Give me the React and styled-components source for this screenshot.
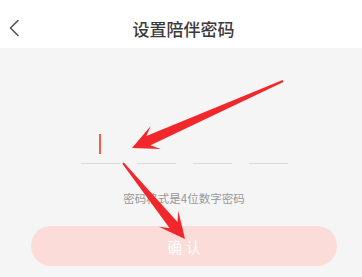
import styled, { createGlobalStyle } from "styled-components";

const GlobalStyle = createGlobalStyle`
  html, body {
    margin: 0;
    padding: 0;
    background: #f5f5f5;
    font-family: "Noto Sans CJK SC", "Noto Sans", sans-serif;
  }
`;

// polygon for a tapered annotation arrow, tail -> tip
const arrowPoints = (tail, tip, headLen = 26, headHalf = 12.5, neck = 18, shaftHalf = 5, tailHalf = 1) => {
  const dx = tip[0] - tail[0];
  const dy = tip[1] - tail[1];
  const len = Math.hypot(dx, dy);
  const ux = dx / len;
  const uy = dy / len;
  const nx = -uy;
  const ny = ux;
  const at = (back, side) => [tip[0] - ux * back + nx * side, tip[1] - uy * back + ny * side];
  const pts = [
    at(len, -tailHalf),
    at(len, tailHalf),
    at(neck, shaftHalf),
    at(headLen, headHalf),
    tip,
    at(headLen, -headHalf),
    at(neck, -shaftHalf),
  ];
  return pts.map((p) => p.map((v) => v.toFixed(1)).join(",")).join(" ");
};

const App = () => {
  return (
    <Page>
      <GlobalStyle />
      <Header>
        <BackButton>
          <svg width="12" height="18" viewBox="0 0 12 18">
            <path d="M10 1.5 L2.5 9 L10 16.5" fill="none" stroke="#555" strokeWidth="1.6" strokeLinecap="round" strokeLinejoin="round" />
          </svg>
        </BackButton>
        <Title>设置陪伴密码</Title>
      </Header>

      <Body>
        <CodeRow>
          <CodeBox><Cursor /></CodeBox>
          <CodeBox />
          <CodeBox />
          <CodeBox />
        </CodeRow>
        <Hint>密码格式是4位数字密码</Hint>
        <ConfirmButton>确 认</ConfirmButton>
      </Body>

      <Annotations width="362" height="277" viewBox="0 0 362 277">
        <polygon points={arrowPoints([283, 81], [132, 148])} fill="#f2272c" />
        <polygon points={arrowPoints([123, 163], [185, 239])} fill="#f2272c" />
      </Annotations>
    </Page>
  );
};

export default App;

const Page = styled.div`
  position: relative;
  width: 362px;
  height: 277px;
  overflow: hidden;
  background: #f5f5f5;
`;

const Header = styled.div`
  position: relative;
  height: 48px;
  background: #ffffff;
  display: flex;
  align-items: center;
  justify-content: center;
`;

const BackButton = styled.div`
  position: absolute;
  left: 8px;
  top: 19px;
  display: flex;
`;

const Title = styled.div`
  font-size: 17px;
  color: #3a3a3a;
  font-weight: 500;
  padding-left: 5px;
  margin-top: 8px;
`;

const Body = styled.div`
  display: flex;
  flex-direction: column;
  align-items: center;
  padding: 85px 25px 0 31px;
`;

const CodeRow = styled.div`
  display: flex;
  gap: 17px;
`;

const CodeBox = styled.div`
  width: 39px;
  height: 29px;
  padding-top: 1px;
  border-bottom: 1px solid #dadada;
  display: flex;
  justify-content: center;
`;

const Cursor = styled.div`
  width: 2px;
  height: 20px;
  background: #f0604f;
`;

const Hint = styled.div`
  margin-top: 26px;
  font-size: 11.5px;
  line-height: 16px;
  color: #999;
`;

const ConfirmButton = styled.div`
  margin-top: 20px;
  width: 100%;
  height: 40px;
  border-radius: 20px;
  background: #fbdcd8;
  color: #fff;
  font-size: 15px;
  display: flex;
  align-items: center;
  justify-content: center;
`;

const Annotations = styled.svg`
  position: absolute;
  left: 0;
  top: 0;
  pointer-events: none;
`;
